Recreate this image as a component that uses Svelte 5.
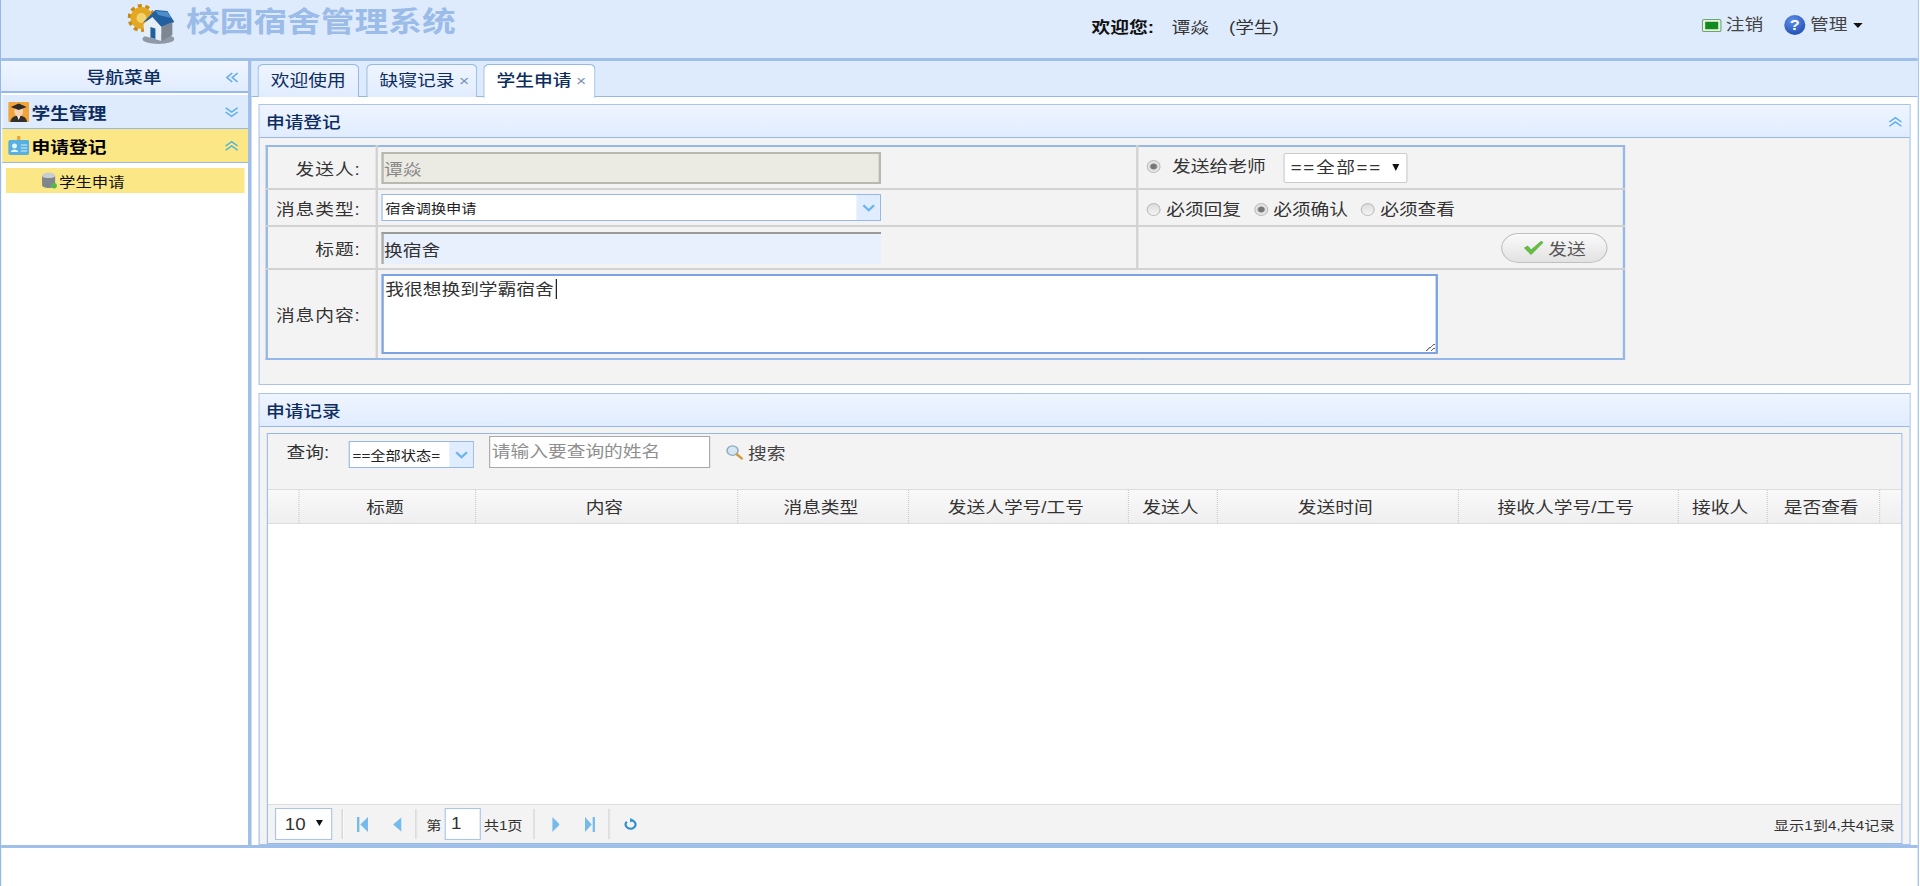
<script>
  // grid columns, widths are in page units (the whole page is stretched by .page transform)
  const columns = [
    { title: '', width: 27.4 },
    { title: '标题', width: 150.4 },
    { title: '内容', width: 224.8 },
    { title: '消息类型', width: 145.3 },
    { title: '发送人学号/工号', width: 188 },
    { title: '发送人', width: 76 },
    { title: '发送时间', width: 206 },
    { title: '接收人学号/工号', width: 188 },
    { title: '接收人', width: 76 },
    { title: '是否查看', width: 96.6 },
    { title: '', width: 19.7 }
  ]

  const gridCols = columns.map((c) => c.width + 'px').join(' ')

  const notifyOptions = [
    { label: '必须回复', checked: false },
    { label: '必须确认', checked: true },
    { label: '必须查看', checked: false }
  ]
</script>

<div class="page">
  <header class="top">
    <svg class="logo" viewBox="0 0 47 41" preserveAspectRatio="none">
      <circle cx="14" cy="15" r="11.5" fill="none" stroke="#c98a10" stroke-width="5" stroke-dasharray="3.8 3.4" />
      <circle cx="14" cy="15" r="11" fill="#e3a823" />
      <circle cx="14" cy="15" r="5" fill="#f3d270" />
      <ellipse cx="31" cy="36" rx="16" ry="5" fill="#4f545c" opacity="0.55" />
      <path d="M15 20 L28 7 L40 8 L47 19 L34 24 L25 15 Z" fill="#22609f" />
      <path d="M28 8 L40 9 L44 15 L31 12 Z" fill="#4f8dca" />
      <path d="M16 21 L25 14 L34 24 L34 38 L17 33 Z" fill="#e6eef6" />
      <path d="M34 24 L45 19 L45 32 L34 38 Z" fill="#7d8691" />
      <path d="M23 24 L28 25.5 L28 36 L23 34.5 Z" fill="#22609f" />
    </svg>
    <h1 class="sys-name">校园宿舍管理系统</h1>
    <div class="welcome"><b>欢迎您:</b><span class="user">谭焱</span><span>(学生)</span></div>
    <div class="top-links">
      <span class="top-link">
        <svg class="i-logout" viewBox="0 0 18 14"><rect x="0.5" y="0.5" width="17" height="13" rx="1.5" fill="#e6f3e2" stroke="#6aa56a" /><rect x="3" y="3" width="12" height="8" fill="#128a20" /></svg>
        注销
      </span>
      <span class="top-link manage">
        <span class="help">?</span>
        管理
        <i class="caret"></i>
      </span>
    </div>
  </header>

  <div class="band"></div>

  <div class="middle">
    <aside class="side">
      <div class="side-title">
        <span>导航菜单</span>
        <svg class="chev-left" viewBox="0 0 12 12"><path d="M6 1 L1 6 L6 11 M11 1 L6 6 L11 11" /></svg>
      </div>
      <div class="acc-head">
        <svg class="acc-icon" viewBox="0 0 20 20" preserveAspectRatio="none">
          <rect width="20" height="20" rx="1" fill="#f2a33a" />
          <path d="M2 20 C3 14 7 14 10 14 C13 14 17 14 18 20 Z" fill="#33302c" />
          <path d="M8.5 14 L10 18 L11.5 14 Z" fill="#fff" />
          <ellipse cx="10" cy="9.5" rx="4.2" ry="5" fill="#f7d3b0" />
          <path d="M2.5 5 L10 1.5 L17.5 5 L10 8 Z" fill="#2d2a28" />
        </svg>
        <span>学生管理</span>
        <svg class="chev" viewBox="0 0 14 14"><path d="M1 2 L7 7 L13 2 M1 7 L7 12 L13 7" /></svg>
      </div>
      <div class="acc-head on">
        <svg class="acc-icon" viewBox="0 0 20 20" preserveAspectRatio="none">
          <rect x="8.5" y="0" width="3" height="6" fill="#e8a33a" />
          <rect x="0" y="4" width="20" height="15" rx="2" fill="#58b0e0" />
          <circle cx="6" cy="10" r="2.4" fill="#e9f5fc" />
          <path d="M2.5 16 C3 12.5 9 12.5 9.5 16 Z" fill="#e9f5fc" />
          <path d="M12 9 H18 M12 12 H18 M12 15 H18" stroke="#d8eefa" stroke-width="1.2" />
        </svg>
        <span>申请登记</span>
        <svg class="chev up" viewBox="0 0 14 14"><path d="M1 7 L7 2 L13 7 M1 12 L7 7 L13 12" /></svg>
      </div>
      <div class="acc-body">
        <div class="menu-item">
          <svg class="db" viewBox="0 0 15 16" preserveAspectRatio="none">
            <ellipse cx="7" cy="3.5" rx="6" ry="3" fill="#c9ced2" />
            <path d="M1 3.5 V12 C1 14 4 15 7 15 C10 15 13 14 13 12 V3.5 C13 6.5 1 6.5 1 3.5 Z" fill="#7f878c" />
            <circle cx="12" cy="13" r="2.6" fill="#4fb94b" />
          </svg>
          <span>学生申请</span>
        </div>
      </div>
    </aside>

    <main class="main">
      <nav class="tabs">
        <div class="tab t1">欢迎使用</div>
        <div class="tab t2">缺寝记录<span class="x">×</span></div>
        <div class="tab t3 active">学生申请<span class="x">×</span></div>
      </nav>

      <div class="tab-body">
        <section class="panel form-panel">
          <div class="panel-head">
            <span>申请登记</span>
            <svg class="chev up" viewBox="0 0 14 14"><path d="M1 7 L7 2 L13 7 M1 12 L7 7 L13 12" /></svg>
          </div>
          <div class="form-body">
            <table class="form">
              <colgroup>
                <col class="c-label" />
                <col class="c-value" />
                <col />
              </colgroup>
              <tbody>
                <tr class="r1">
                  <td class="label">发送人:</td>
                  <td><input class="field sender" value="谭焱" disabled /></td>
                  <td class="opts">
                    <input class="radio" type="radio" checked />
                    <span class="send-to">发送给老师</span>
                    <span class="native">
                      <select class="teacher"><option>==全部==</option></select>
                    </span>
                  </td>
                </tr>
                <tr class="r2">
                  <td class="label">消息类型:</td>
                  <td>
                    <div class="combo wide">
                      <span class="combo-text">宿舍调换申请</span>
                      <span class="combo-arrow"><svg viewBox="0 0 12 8"><path d="M1 1 L6 6.5 L11 1" /></svg></span>
                    </div>
                  </td>
                  <td class="opts">
                    {#each notifyOptions as opt}
                      <label class="check">
                        <input class="radio" type="radio" checked={opt.checked} />
                        {opt.label}
                      </label>
                    {/each}
                  </td>
                </tr>
                <tr class="r3">
                  <td class="label">标题:</td>
                  <td><input class="field subject" value="换宿舍" /></td>
                  <td class="send-cell">
                    <button class="send">
                      <svg viewBox="0 0 18 16"><path d="M1 8 L4 6 L7 10 L16 1 L18 2 L7 15 Z" fill="#62c23e" stroke="#3f9a2a" stroke-width="0.6" /></svg>
                      发送
                    </button>
                  </td>
                </tr>
                <tr class="r4">
                  <td class="label">消息内容:</td>
                  <td colspan="2" class="msg-cell">
                    <div class="msg-wrap">
                      <textarea class="msg">我很想换到学霸宿舍</textarea>
                      <span class="text-caret"></span>
                    </div>
                  </td>
                </tr>
              </tbody>
            </table>
          </div>
        </section>

        <section class="panel list-panel">
          <div class="panel-head"><span>申请记录</span></div>
          <div class="list-body">
            <div class="grid">
              <div class="toolbar">
                <span class="q-label">查询:</span>
                <div class="combo status">
                  <span class="combo-text">==全部状态=</span>
                  <span class="combo-arrow"><svg viewBox="0 0 12 8"><path d="M1 1 L6 6.5 L11 1" /></svg></span>
                </div>
                <input class="search-input" placeholder="请输入要查询的姓名" />
                <span class="search">
                  <svg viewBox="0 0 16 16">
                    <circle cx="6.5" cy="6.5" r="5" fill="#d5e6f5" stroke="#8fa9bf" stroke-width="1.4" />
                    <path d="M10.5 10.5 L15 15" stroke="#d39a3c" stroke-width="2.4" stroke-linecap="round" />
                  </svg>
                  搜索
                </span>
              </div>
              <div class="grid-head" style="grid-template-columns: {gridCols}">
                {#each columns as col}
                  <div class="th">{col.title}</div>
                {/each}
              </div>
              <div class="grid-rows"></div>
              <div class="pager">
                <span class="native small">
                  <select class="page-size"><option>10</option></select>
                </span>
                <i class="sep s1"></i>
                <svg class="pg first" viewBox="0 0 11 12" preserveAspectRatio="none"><path d="M0 0 H2.5 V12 H0 Z M11 0 V12 L3.5 6 Z" /></svg>
                <svg class="pg prev" viewBox="0 0 8 12" preserveAspectRatio="none"><path d="M8 0 V12 L0 6 Z" /></svg>
                <i class="sep s2"></i>
                <span class="pg-text">第</span>
                <input class="page-no" value="1" />
                <span class="pg-text">共1页</span>
                <i class="sep s3"></i>
                <svg class="pg next" viewBox="0 0 8 12" preserveAspectRatio="none"><path d="M0 0 V12 L8 6 Z" /></svg>
                <svg class="pg last" viewBox="0 0 11 12" preserveAspectRatio="none"><path d="M0 0 V12 L7.5 6 Z M8.5 0 H11 V12 H8.5 Z" /></svg>
                <i class="sep s4"></i>
                <svg class="refresh" viewBox="0 0 14 14">
                  <path d="M7.6 2.6 A5 5 0 1 1 3.2 4.2" fill="none" stroke="#2f8fd0" stroke-width="2.2" />
                  <path d="M6.5 0 L10.5 2.6 L6.5 5.2 Z" fill="#2f8fd0" />
                </svg>
                <span class="pg-info">显示1到4,共4记录</span>
              </div>
            </div>
          </div>
        </section>
      </div>
    </main>
  </div>

  <div class="band"></div>
  <div class="foot"></div>
</div>

<style>
  :global(html), :global(body) {
    margin: 0;
    height: 100%;
    overflow: hidden;
    background: #fff;
  }

  /* the screenshot is wider than it is tall, so everything is laid out narrower and stretched */
  .page {
    width: 1640px;
    height: 886px;
    box-sizing: border-box;
    border-left: 1px solid #95b8e7;
    border-right: 1px solid #95b8e7;
    transform: scaleX(1.17);
    transform-origin: 0 0;
    display: flex;
    flex-direction: column;
    font-family: "Liberation Sans", "Noto Sans CJK SC", sans-serif;
    font-size: 16px;
    color: #333;
    background: #fff;
  }

  .band {
    height: 3px;
    background: #9dbfea;
    flex: none;
  }

  .foot {
    flex: 1;
  }

  /* header */
  .top {
    height: 58px;
    flex: none;
    box-sizing: border-box;
    background: #deebfd;
    display: flex;
    align-items: flex-start;
    padding-left: 108px;
    position: relative;
  }

  .logo {
    width: 40px;
    height: 41px;
    margin-top: 3px;
    flex: none;
  }

  .sys-name {
    margin: 0 0 0 10px;
    font-size: 28.8px;
    line-height: 44px;
    font-weight: bold;
    color: #9bbbe8;
    white-space: nowrap;
  }

  .welcome {
    position: absolute;
    left: 932px;
    top: 17px;
    line-height: 22px;
    display: flex;
    color: #333;
  }

  .welcome b {
    color: #111;
    margin-right: 15px;
  }

  .user {
    margin-right: 17px;
  }

  .top-links {
    margin-left: auto;
    margin-right: 47px;
    margin-top: 14px;
    display: flex;
    gap: 18px;
    line-height: 22px;
    color: #444;
  }

  .top-link {
    display: flex;
    align-items: center;
    gap: 3px;
  }

  .i-logout {
    width: 18px;
    height: 13px;
    flex: none;
  }

  .help {
    width: 18px;
    height: 20px;
    flex: none;
    border-radius: 50%;
    background: radial-gradient(circle at 40% 30%, #5f90ea, #123fa6);
    color: #fff;
    font-size: 14px;
    line-height: 20px;
    text-align: center;
    font-weight: bold;
    margin-right: 1px;
  }

  .caret {
    width: 0;
    height: 0;
    border-left: 4.5px solid transparent;
    border-right: 4.5px solid transparent;
    border-top: 5px solid #111;
    margin-left: 2px;
  }

  /* body split */
  .middle {
    height: 784px;
    flex: none;
    display: flex;
    gap: 3.4px;
    background: #9dbfea;
  }

  .side {
    width: 211px;
    flex: none;
    background: #fff;
    position: relative;
  }

  .side-title {
    height: 32px;
    box-sizing: border-box;
    background: linear-gradient(#eff5ff, #e0ecff);
    color: #0e2d5f;
    font-weight: 500;
    line-height: 34px;
    text-align: center;
    border-bottom: 2px solid #95b8e7;
  }

  .side-title span {
    margin-right: 1px;
  }

  .chev-left {
    position: absolute;
    right: 8px;
    top: 10px;
    width: 11px;
    height: 13px;
    fill: none;
    stroke: #66aee8;
    stroke-width: 1.6;
  }

  .acc-head {
    position: relative;
    height: 34px;
    box-sizing: border-box;
    background: #deebfd;
    border-bottom: 1px solid #95b8e7;
    margin-top: 2px;
    margin-left: 1px;
    display: flex;
    align-items: center;
    font-weight: bold;
    color: #0e2d5f;
    padding-left: 5px;
    gap: 2px;
  }

  .acc-head.on {
    background: #fbe785;
    color: #000;
    margin-top: 0;
  }

  .acc-icon {
    width: 18px;
    height: 20px;
    flex: none;
  }

  .chev {
    position: absolute;
    right: 8px;
    top: 10px;
    width: 12px;
    height: 14px;
    fill: none;
    stroke: #5fb0ec;
    stroke-width: 1.6;
  }

  .acc-head.on .chev {
    stroke: #57b3d2;
  }

  .acc-body {
    padding: 5px 3px 0 3.5px;
  }

  .menu-item {
    height: 25px;
    background: #fbe785;
    display: flex;
    align-items: center;
    padding-left: 30px;
    gap: 2px;
    font-size: 14px;
    color: #111;
  }

  .db {
    width: 14px;
    height: 17px;
    flex: none;
  }

  /* tabs */
  .main {
    flex: 1;
    min-width: 0;
    background: #fff;
    display: flex;
    flex-direction: column;
  }

  .tabs {
    height: 36px;
    flex: none;
    box-sizing: border-box;
    background: #deebfd;
    border-bottom: 1px solid #95b8e7;
    padding: 3px 0 0 5px;
    display: flex;
  }

  .tab {
    height: 33px;
    box-sizing: border-box;
    border: 1px solid #95b8e7;
    border-bottom: none;
    border-radius: 5px 5px 0 0;
    background: linear-gradient(#eff5ff, #e0ecff);
    line-height: 32px;
    color: #0e2d5f;
    white-space: nowrap;
    padding-left: 10px;
  }

  .t1 { width: 87px; }
  .t2 { width: 95px; margin-left: 6px; }
  .t3 { width: 96px; margin-left: 5px; }

  .tab.active {
    height: 34px;
    background: #fff;
    font-weight: 500;
    position: relative;
  }

  .x {
    color: #7a93b5;
    font-size: 15px;
    margin-left: 4px;
    font-weight: normal;
  }

  .tab-body {
    flex: 1;
    min-height: 0;
    padding: 7px 6px 0 5.9px;
    display: flex;
    flex-direction: column;
    gap: 8px;
  }

  /* panels */
  .panel {
    border: 1px solid #a9c4ec;
    box-sizing: border-box;
    background: #f3f3f3;
    display: flex;
    flex-direction: column;
  }

  .form-panel {
    height: 281px;
    flex: none;
  }

  .list-panel {
    flex: 1;
    min-height: 0;
  }

  .panel-head {
    height: 33px;
    flex: none;
    box-sizing: border-box;
    background: linear-gradient(#eff5ff, #e0ecff);
    border-bottom: 1px solid #95b8e7;
    line-height: 35px;
    padding-left: 5px;
    font-weight: 500;
    color: #0e2d5f;
    position: relative;
  }

  .panel-head .chev {
    right: 6px;
  }

  .form-body {
    padding: 7px 0 0 5px;
  }

  /* form table */
  .form {
    width: 1162px;
    table-layout: fixed;
    border-collapse: collapse;
  }

  .c-label { width: 94px; }
  .c-value { width: 650px; }

  .form td {
    border: 2px solid #d2d2d2;
    padding: 0 0 0 3px;
    background: #f3f3f3;
    box-sizing: border-box;
    vertical-align: middle;
  }

  /* cell borders win over the table's in collapse mode, so the blue frame goes on the cells */
  .form tr:first-child td { border-top-color: #95b8e7; }
  .form tr:last-child td { border-bottom-color: #95b8e7; }
  .form td:first-child { border-left-color: #95b8e7; }
  .form td:last-child { border-right-color: #95b8e7; }

  .r1 td { height: 43px; }
  .r2 td { height: 37px; }
  .r3 td { height: 43px; }
  .r4 td { height: 90px; }

  .form td.label {
    text-align: right;
    padding: 0 13px 0 0;
    color: #333;
    letter-spacing: 0.8px;
  }

  .field {
    display: block;
    width: 427px;
    height: 32px;
    box-sizing: border-box;
    padding: 0;
    margin: 0;
    font: inherit;
    color: #333;
  }

  .sender {
    background: #ebebe4;
    border: 2px solid #b8b8b0;
    color: #888;
  }

  .subject {
    background: #e8f0fe;
    border: none;
    border-top: 2px solid #9a9a9a;
    border-left: 2px solid #aaa;
  }

  .combo {
    height: 27px;
    box-sizing: border-box;
    border: 1px solid #95b8e7;
    background: #fff;
    display: flex;
    align-items: center;
    font-size: 13px;
    color: #222;
  }

  .combo.wide {
    width: 427px;
  }

  .combo-text {
    flex: 1;
    min-width: 0;
    overflow: hidden;
    white-space: nowrap;
    padding-left: 2px;
  }

  .combo-arrow {
    width: 20px;
    height: 100%;
    background: #e0ecff;
    display: flex;
    align-items: center;
    justify-content: center;
    flex: none;
  }

  .combo-arrow svg {
    width: 11px;
    height: 8px;
    fill: none;
    stroke: #6db6ea;
    stroke-width: 2.2;
  }

  .form td.opts {
    padding-left: 7px;
    white-space: nowrap;
  }

  .radio {
    appearance: none;
    width: 12px;
    height: 13px;
    margin: 0;
    border-radius: 50%;
    border: 1px solid #bdbdbd;
    background: linear-gradient(#dcdcdc, #f4f4f4);
    vertical-align: -1px;
    box-sizing: border-box;
  }

  .radio:checked {
    background: radial-gradient(circle, #777 0 2.6px, #e4e4e4 3.4px);
  }

  .send-to {
    margin-left: 5px;
  }

  .native {
    position: relative;
    display: inline-block;
    margin-left: 11px;
    vertical-align: middle;
  }

  .native::after {
    content: '';
    position: absolute;
    right: 7px;
    top: 11px;
    border-left: 3.5px solid transparent;
    border-right: 3.5px solid transparent;
    border-top: 7px solid #111;
    pointer-events: none;
  }

  .teacher {
    appearance: none;
    display: block;
    width: 106px;
    height: 30px;
    box-sizing: border-box;
    padding: 0 0 0 5px;
    border: 1px solid #ccc;
    border-radius: 2px;
    background: #fff;
    font: inherit;
    letter-spacing: 1.4px;
    color: #333;
  }

  .check {
    margin-right: 11px;
  }

  .form td.send-cell {
    text-align: right;
    padding-right: 13px;
  }

  .send {
    width: 91px;
    height: 30px;
    border: 1px solid #c0c0c0;
    border-radius: 15px;
    background: linear-gradient(#fafafa, #e2e2e2);
    font: inherit;
    color: #555;
    padding: 0;
    display: inline-flex;
    align-items: center;
    justify-content: center;
    gap: 4px;
    vertical-align: middle;
  }

  .send svg {
    width: 17px;
    height: 16px;
  }

  .msg-wrap {
    position: relative;
    width: 903px;
    height: 80px;
  }

  .msg {
    display: block;
    width: 100%;
    height: 100%;
    box-sizing: border-box;
    margin: 0;
    padding: 3px 1px;
    border: 2px solid #7ba3e2;
    background: #fff;
    font: inherit;
    line-height: 22px;
    color: #333;
    outline: none;
  }

  .text-caret {
    position: absolute;
    left: 149px;
    top: 5px;
    width: 1px;
    height: 20px;
    background: #111;
  }

  /* record list */
  .list-body {
    flex: 1;
    min-height: 0;
    padding: 6px 5.6px 0 5.6px;
    display: flex;
  }

  .grid {
    flex: 1;
    min-width: 0;
    box-sizing: border-box;
    border: 1px solid #95b8e7;
    background: #fff;
    display: flex;
    flex-direction: column;
  }

  .toolbar {
    height: 55px;
    flex: none;
    box-sizing: border-box;
    background: #f3f3f3;
    display: flex;
    align-items: flex-start;
    padding: 2px 0 0 16px;
  }

  .q-label {
    line-height: 32px;
    margin-top: 1px;
  }

  .combo.status {
    width: 107px;
    margin: 5px 0 0 17px;
  }

  .search-input {
    width: 189px;
    height: 32px;
    box-sizing: border-box;
    margin: 0 0 0 13px;
    padding: 0 1px;
    border: 1px solid #aaa;
    background: #fff;
    font: inherit;
  }

  .search-input::placeholder {
    color: #8f8f8f;
    opacity: 1;
  }

  .search {
    display: flex;
    align-items: center;
    gap: 4px;
    height: 32px;
    margin-left: 13px;
    color: #444;
  }

  .search svg {
    width: 15px;
    height: 16px;
  }

  .grid-head {
    height: 35px;
    flex: none;
    box-sizing: border-box;
    display: grid;
    background: linear-gradient(#f9f9f9, #efefef);
    border-top: 1px solid #ddd;
    border-bottom: 1px solid #ddd;
  }

  .th {
    text-align: center;
    line-height: 35px;
    padding-right: 4px;
    border-right: 1px dotted #ccc;
    color: #333;
    white-space: nowrap;
  }

  .th:last-child {
    border-right: none;
  }

  .grid-rows {
    flex: 1;
    background: #fff;
  }

  .pager {
    height: 39px;
    flex: none;
    box-sizing: border-box;
    background: #f3f3f3;
    border-top: 1px solid #ddd;
    display: flex;
    align-items: center;
    padding-left: 6.5px;
    font-size: 13px;
    position: relative;
  }

  .native.small {
    margin-left: 0;
  }

  .native.small::after {
    right: 8px;
    top: 12px;
    border-top-width: 6px;
  }

  .page-size {
    appearance: none;
    display: block;
    width: 49px;
    height: 32px;
    box-sizing: border-box;
    padding: 0 0 0 7px;
    border: 1px solid #a9c4ec;
    background: #fff;
    font-family: inherit;
    font-size: 16px;
    color: #333;
  }

  .sep {
    width: 1px;
    height: 30px;
    background: #d0d0d0;
    border-right: 1px solid #fafafa;
    flex: none;
  }

  .s1 { margin-left: 8px; }
  .s2 { margin-left: 12px; }
  .s3 { margin-left: 9px; }
  .s4 { margin-left: 11px; }

  .pg {
    height: 15px;
    fill: #74baeb;
    flex: none;
  }

  .first { width: 9.5px; margin-left: 11px; }
  .prev { width: 7.5px; margin-left: 21px; }
  .next { width: 6.5px; margin-left: 14px; }
  .last { width: 8.5px; margin-left: 22px; }

  .pg-text {
    color: #333;
    white-space: nowrap;
  }

  .s2 + .pg-text {
    margin-left: 7px;
  }

  .page-no {
    width: 31px;
    height: 32px;
    box-sizing: border-box;
    margin: 0 2px 0 3px;
    padding: 0 0 0 4px;
    border: 1px solid #a9c4ec;
    background: #fff;
    font-family: inherit;
    font-size: 16px;
    color: #333;
  }

  .refresh {
    width: 12px;
    height: 14px;
    margin-left: 11px;
  }

  .pg-info {
    margin-left: auto;
    margin-right: 6px;
    color: #333;
    white-space: nowrap;
  }
</style>
